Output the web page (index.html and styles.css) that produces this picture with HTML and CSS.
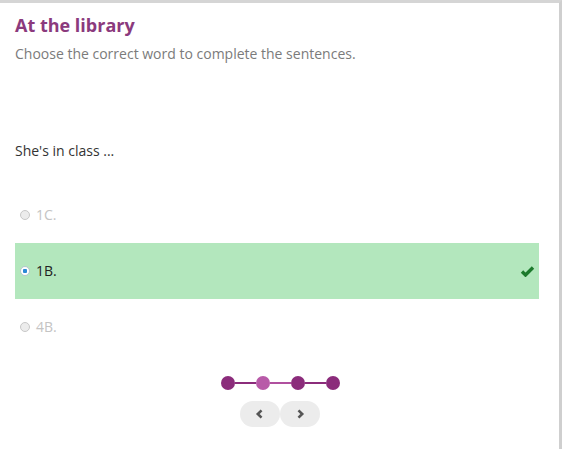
FILE: index.html
```html
<!DOCTYPE html>
<html>
<head>
<meta charset="utf-8">
<link rel="stylesheet" href="styles.css">
</head>
<body>
<div class="frame">
  <div class="content">
    <h1 class="title">At the library</h1>
    <p class="subtitle">Choose the correct word to complete the sentences.</p>
    <p class="question">She's in class ...</p>
    <div class="options">
      <div class="option disabled"><span class="radio"></span><span class="label">1C.</span></div>
      <div class="option correct"><span class="radio checked"></span><span class="label">1B.</span>
        <svg class="check" width="15" height="12" viewBox="0 0 15 12"><path d="M2 6.5 L5.5 10 L13 2.5" fill="none" stroke="#1c7a2c" stroke-width="3.4" stroke-linejoin="miter"/></svg>
      </div>
      <div class="option disabled"><span class="radio"></span><span class="label">4B.</span></div>
    </div>
    <div class="pager">
      <div class="dots">
        <span class="dot"></span><span class="line"></span><span class="dot current"></span><span class="line light"></span><span class="dot"></span><span class="line"></span><span class="dot"></span>
      </div>
      <div class="nav">
        <button class="navbtn"><svg width="10" height="10" viewBox="0 0 10 10"><path d="M6.5 1.3 L2.8 5 L6.5 8.7" fill="none" stroke="#555" stroke-width="2.6"/></svg></button>
        <button class="navbtn"><svg width="10" height="10" viewBox="0 0 10 10"><path d="M3.5 1.3 L7.2 5 L3.5 8.7" fill="none" stroke="#555" stroke-width="2.6"/></svg></button>
      </div>
    </div>
  </div>
</div>
</body>
</html>
```

FILE: styles.css
```css
html, body {
  margin: 0;
  padding: 0;
  background: #fff;
}
body {
  font-family: "Open Sans", "Liberation Sans", sans-serif;
}
.frame {
  width: 559px;
  height: 446px;
  border-top: 3px solid #d5d5d5;
  border-right: 3px solid #cfcfcf;
  overflow: hidden;
}
.content {
  padding: 0 20px 0 15px;
}
.title {
  margin: 10px 0 0 0;
  font-size: 18px;
  font-weight: 700;
  color: #8b3a7d;
  line-height: 24px;
}
.subtitle {
  margin: 7px 0 0 0;
  font-size: 14px;
  color: #7b7b7b;
  line-height: 20px;
}
.question {
  margin: 77px 0 0 0;
  font-size: 14px;
  color: #333;
  line-height: 20px;
}
.options {
  margin-top: 26px;
  display: flex;
  flex-direction: column;
}
.option {
  height: 56px;
  display: flex;
  align-items: center;
  padding-left: 5px;
  font-size: 14px;
  position: relative;
}
.option.disabled {
  color: #c4c4c4;
}
.option.correct {
  background: #b3e7bd;
  color: #222;
}
.radio {
  width: 10px;
  height: 10px;
  border-radius: 50%;
  border: 1px solid #c8c8c8;
  background: #ececec;
  margin-right: 6px;
  box-sizing: border-box;
}
.radio.checked {
  background: radial-gradient(circle, #2b8ad6 0 2px, #fff 2.5px);
  border-color: #b9c6d0;
}
.label {
  line-height: 20px;
}
.check {
  margin-left: auto;
  margin-right: 4px;
}
.pager {
  margin-top: 21px;
  margin-left: 6px;
  display: flex;
  flex-direction: column;
  align-items: center;
}
.dots {
  display: flex;
  align-items: center;
}
.dot {
  width: 14px;
  height: 14px;
  border-radius: 50%;
  background: #8b2c7b;
}
.dot.current {
  background: #b85aa8;
}
.line {
  width: 21px;
  height: 2px;
  background: #8b2c7b;
}
.line.light {
  background: #b0509f;
}
.nav {
  margin-top: 11px;
  display: flex;
}
.navbtn {
  width: 40px;
  height: 26px;
  border: none;
  background: #ececec;
  border-radius: 13px;
  display: flex;
  align-items: center;
  justify-content: center;
  padding: 0;
}
```
